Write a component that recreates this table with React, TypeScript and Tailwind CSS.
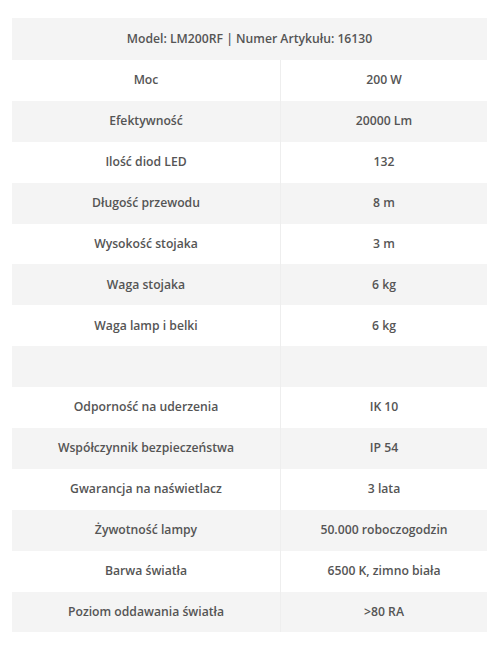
import React from 'react';

const rows: [string, string][] = [
  ['Moc', '200 W'],
  ['Efektywność', '20000 Lm'],
  ['Ilość diod LED', '132'],
  ['Długość przewodu', '8 m'],
  ['Wysokość stojaka', '3 m'],
  ['Waga stojaka', '6 kg'],
  ['Waga lamp i belki', '6 kg'],
  ['', ''],
  ['Odporność na uderzenia', 'IK 10'],
  ['Współczynnik bezpieczeństwa', 'IP 54'],
  ['Gwarancja na naświetlacz', '3 lata'],
  ['Żywotność lampy', '50.000 roboczogodzin'],
  ['Barwa światła', '6500 K, zimno biała'],
  ['Poziom oddawania światła', '>80 RA'],
];

const App: React.FC = () => {
  return (
    <div className="bg-white w-[500px] h-[650px] pt-[18px] px-[12px]" style={{ fontFamily: '"Open Sans", sans-serif' }}>
      <div className="w-[475px] text-[12.2px] font-semibold text-[#555]">
        <div className="h-[42px] flex items-center justify-center bg-[#f4f4f4]">
          Model: LM200RF | Numer Artykułu: 16130
        </div>
        {rows.map(([label, value], i) => (
          <div key={i} className={`flex h-[40.9px] ${i % 2 === 1 ? 'bg-[#f4f4f4]' : 'bg-white'}`}>
            <div className="w-[268px] flex items-center justify-center">{label}</div>
            <div className="flex-1 flex items-center justify-center border-l border-[#eeeeee]">{value}</div>
          </div>
        ))}
      </div>
    </div>
  );
};

export default App;
